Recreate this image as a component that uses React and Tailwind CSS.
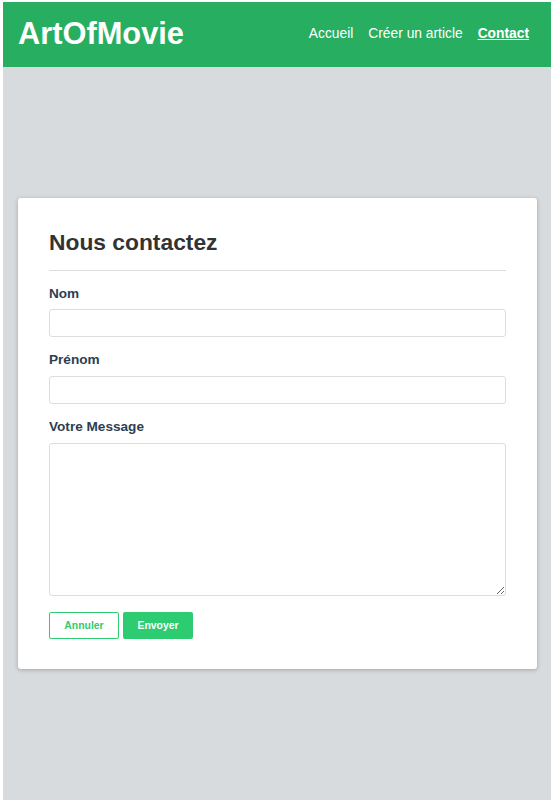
export default function App() {
  return (
    <div className="bg-white pl-[3px] pt-[2px] pb-[5px] font-['Liberation_Sans',Arial,sans-serif]">
      {/* Header */}
      <header className="h-[65px] bg-[#27ae60] flex items-center justify-between pl-[15px] pr-[22px]">
        <h1 className="text-[30.8px] font-bold text-white leading-none">ArtOfMovie</h1>
        <nav className="flex items-center gap-[15px] text-[13.8px] text-white">
          <a href="#">Accueil</a>
          <a href="#">Créer un article</a>
          <a href="#" className="font-bold underline">Contact</a>
        </nav>
      </header>

      {/* Content */}
      <main className="bg-[#d8dbde] h-[733px] flex items-center px-[15px] pr-[14px]">
        <div className="w-full bg-white rounded-[3px] shadow-[0_1px_4px_rgba(0,0,0,0.25)] px-[31px] pt-[30px] pb-[30px]">
          <h2 className="text-[22.8px] font-bold text-[#333] leading-[28px] pb-[14px] border-b border-[#dcdcdc]">
            Nous contactez
          </h2>

          <form className="flex flex-col">
            <label className="mt-[13px] mb-[5px] text-[13.6px] font-bold text-[#2c3e50] leading-[20px]">Nom</label>
            <input type="text" className="h-[28px] w-full border border-[#dddddd] rounded-[3px] outline-none" />

            <label className="mt-[13px] mb-[6px] text-[13.6px] font-bold text-[#2c3e50] leading-[20px]">Prénom</label>
            <input type="text" className="h-[28px] w-full border border-[#dddddd] rounded-[3px] outline-none" />

            <label className="mt-[13px] mb-[6px] text-[13.6px] font-bold text-[#2c3e50] leading-[20px]">Votre Message</label>
            <textarea className="h-[153px] w-full border border-[#dddddd] rounded-[3px] outline-none resize-y" />

            <div className="flex gap-[4px] mt-[16px]">
              <button type="button" className="w-[70px] h-[27px] border border-[#2ecc71] rounded-[2px] bg-white text-[#2ecc71] text-[10.4px] font-bold">
                Annuler
              </button>
              <button type="submit" className="w-[70px] h-[27px] rounded-[2px] bg-[#2ecc71] text-white text-[10.4px] font-bold">
                Envoyer
              </button>
            </div>
          </form>
        </div>
      </main>
    </div>
  );
}
